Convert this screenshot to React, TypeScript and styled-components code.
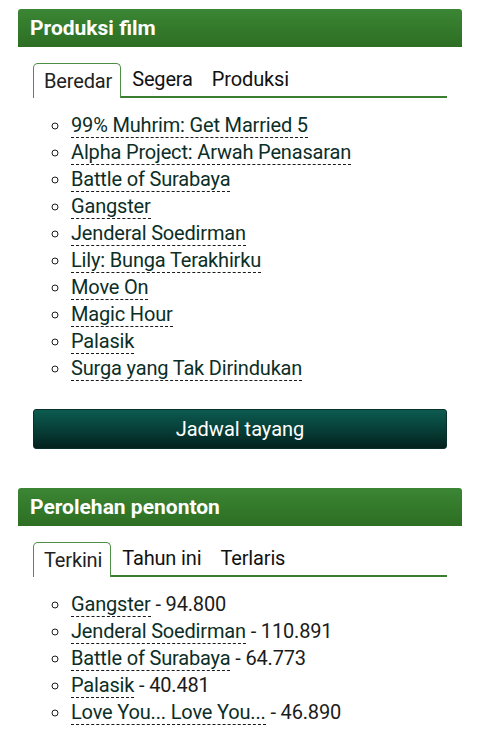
import React, { useState } from "react";
import styled, { createGlobalStyle } from "styled-components";

const GlobalStyle = createGlobalStyle`
  body {
    margin: 0;
    background: #ffffff;
    font-family: Roboto, "Noto Sans", sans-serif;
  }
`;

const Page = styled.div`
  padding: 9px 18px 0;
`;

const Section = styled.section`
  margin-bottom: 39px;
`;

const Header = styled.h2`
  margin: 0;
  height: 38px;
  display: flex;
  align-items: center;
  padding: 0 12px;
  border-radius: 3px 3px 0 0;
  background: linear-gradient(180deg, #3b8634 0%, #2d6e23 100%);
  color: #ffffff;
  font-size: 21px;
  font-weight: 700;
`;

const Body = styled.div`
  padding: 15px 15px 0;
`;

const TabBar = styled.div`
  display: flex;
  align-items: flex-end;
  height: 34px;
  border-bottom: 2px solid #3a7d31;
`;

const Tab = styled.button<{ $active?: boolean }>`
  height: ${(p) => (p.$active ? "35px" : "34px")};
  margin-bottom: ${(p) => (p.$active ? "-2px" : "0")};
  padding: ${(p) => (p.$active ? "0 8px 0 10px" : "0 8px 0 11px")};
  border: ${(p) => (p.$active ? "1px solid #4d8f45" : "none")};
  border-bottom: none;
  border-radius: 5px 5px 0 0;
  background: #ffffff;
  color: ${(p) => (p.$active ? "#222" : "#111")};
  font-family: Roboto, sans-serif;
  font-size: 20px;
  letter-spacing: -0.15px;
  cursor: pointer;
`;

const List = styled.ul`
  margin: 14px 0 0;
  padding-left: 38px;
  list-style: circle;
`;

const Item = styled.li`
  font-size: 20px;
  line-height: 27px;
  letter-spacing: -0.17px;
  color: #1b1b1b;
`;

const Title = styled.a`
  color: #0b2e27;
  text-decoration: none;
  border-bottom: 1px dashed #1a1a1a;
  cursor: pointer;
`;

const ScheduleButton = styled.button`
  display: block;
  width: 100%;
  height: 40px;
  margin-top: 27px;
  border: 1px solid #0a2e29;
  border-radius: 3px;
  background: linear-gradient(180deg, #0c5b50 0%, #063a33 60%, #03201c 100%);
  color: #ffffff;
  font-family: Roboto, sans-serif;
  font-size: 20px;
  cursor: pointer;
`;

type Film = { title: string; count?: string };

const produksi: Film[] = [
  { title: "99% Muhrim: Get Married 5" },
  { title: "Alpha Project: Arwah Penasaran" },
  { title: "Battle of Surabaya" },
  { title: "Gangster" },
  { title: "Jenderal Soedirman" },
  { title: "Lily: Bunga Terakhirku" },
  { title: "Move On" },
  { title: "Magic Hour" },
  { title: "Palasik" },
  { title: "Surga yang Tak Dirindukan" },
];

const penonton: Film[] = [
  { title: "Gangster", count: "94.800" },
  { title: "Jenderal Soedirman", count: "110.891" },
  { title: "Battle of Surabaya", count: "64.773" },
  { title: "Palasik", count: "40.481" },
  { title: "Love You... Love You...", count: "46.890" },
];

function Tabs({ names }: { names: string[] }) {
  const [active, setActive] = useState(0);
  return (
    <TabBar>
      {names.map((name, i) => (
        <Tab key={name} $active={i === active} onClick={() => setActive(i)}>
          {name}
        </Tab>
      ))}
    </TabBar>
  );
}

function FilmList({ films }: { films: Film[] }) {
  return (
    <List>
      {films.map((film) => (
        <Item key={film.title}>
          <Title>{film.title}</Title>
          {film.count && ` - ${film.count}`}
        </Item>
      ))}
    </List>
  );
}

function App() {
  return (
    <Page>
      <GlobalStyle />
      <Section>
        <Header>Produksi film</Header>
        <Body>
          <Tabs names={["Beredar", "Segera", "Produksi"]} />
          <FilmList films={produksi} />
          <ScheduleButton>Jadwal tayang</ScheduleButton>
        </Body>
      </Section>
      <Section>
        <Header>Perolehan penonton</Header>
        <Body>
          <Tabs names={["Terkini", "Tahun ini", "Terlaris"]} />
          <FilmList films={penonton} />
        </Body>
      </Section>
    </Page>
  );
}

export default App;
